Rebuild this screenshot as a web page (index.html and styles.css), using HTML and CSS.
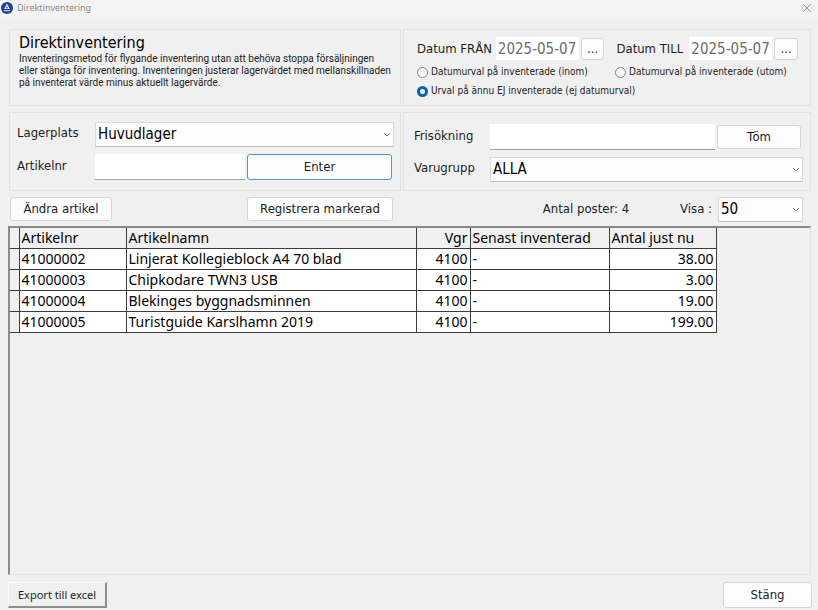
FILE: index.html
```html
<!DOCTYPE html>
<html lang="sv">
<head>
    <meta charset="UTF-8">
    <title>Direktinventering</title>
    <link rel="stylesheet" href="styles.css">
</head>
<body>
    <header class="titlebar">
        <svg class="app-icon" width="12" height="12" viewBox="0 0 12 12">
            <circle cx="6" cy="6" r="6" fill="#1c3f97"/>
            <path d="M6 1.5 L9 7 H3 Z" fill="#dfe8fb"/>
            <path d="M6 4 L7.2 6.2 H4.8 Z" fill="#3d62b5"/>
            <path d="M2.5 8 H9.5 L8.6 9.3 H3.4 Z" fill="#b9c9ee"/>
        </svg>
        <span class="window-title">Direktinventering</span>
        <button class="close" aria-label="Stäng fönster">
            <svg width="8" height="8" viewBox="0 0 8 8"><path d="M0.3 0.3 L7.7 7.7 M7.7 0.3 L0.3 7.7" stroke="#8f8f8f" fill="none"/></svg>
        </button>
    </header>

    <main class="content">
        <div class="panels">
            <section class="panel intro">
                <h1>Direktinventering</h1>
                <p>Inventeringsmetod för flygande inventering utan att behöva stoppa försäljningen<br>
                eller stänga för inventering. Inventeringen justerar lagervärdet med mellanskillnaden<br>
                på inventerat värde minus aktuellt lagervärde.</p>
            </section>

            <section class="panel dates">
                <div class="date-row">
                    <label for="from">Datum FRÅN</label>
                    <input class="date" id="from" type="text" value="2025-05-07">
                    <button class="btn dots">...</button>
                    <label class="to" for="to">Datum TILL</label>
                    <input class="date" id="to" type="text" value="2025-05-07">
                    <button class="btn dots">...</button>
                </div>
                <div class="radios">
                    <label><input type="radio" name="urval">Datumurval på inventerade (inom)</label>
                    <label><input type="radio" name="urval">Datumurval på inventerade (utom)</label>
                    <label><input type="radio" name="urval" checked>Urval på ännu EJ inventerade (ej datumurval)</label>
                </div>
            </section>

            <section class="panel place">
                <label for="lager">Lagerplats</label>
                <div class="select wide">
                    <select id="lager"><option>Huvudlager</option></select>
                    <svg class="arrow" width="8" height="5" viewBox="0 0 8 5"><path d="M1 1 L4 4 L7 1"/></svg>
                </div>
                <label for="artnr">Artikelnr</label>
                <input class="field" id="artnr" type="text">
                <button class="btn enter">Enter</button>
            </section>

            <section class="panel search">
                <label for="fri">Frisökning</label>
                <input class="field" id="fri" type="text">
                <button class="btn clear">Töm</button>
                <label for="grupp">Varugrupp</label>
                <div class="select wide">
                    <select id="grupp"><option>ALLA</option></select>
                    <svg class="arrow" width="8" height="5" viewBox="0 0 8 5"><path d="M1 1 L4 4 L7 1"/></svg>
                </div>
            </section>
        </div>

        <div class="toolbar">
            <button class="btn edit">Ändra artikel</button>
            <button class="btn register">Registrera markerad</button>
            <span class="count">Antal poster: 4</span>
            <label for="visa">Visa :</label>
            <div class="select show">
                <select id="visa"><option>50</option></select>
                <svg class="arrow" width="8" height="5" viewBox="0 0 8 5"><path d="M1 1 L4 4 L7 1"/></svg>
            </div>
        </div>

        <div class="grid">
            <table>
                <colgroup>
                    <col class="c-mark"><col class="c-nr"><col class="c-name"><col class="c-vgr"><col class="c-date"><col class="c-qty">
                </colgroup>
                <thead>
                    <tr><th></th><th>Artikelnr</th><th>Artikelnamn</th><th class="num">Vgr</th><th>Senast inventerad</th><th>Antal just nu</th></tr>
                </thead>
                <tbody>
                    <tr><td></td><td>41000002</td><td>Linjerat Kollegieblock A4 70 blad</td><td class="num">4100</td><td>-</td><td class="num">38.00</td></tr>
                    <tr><td></td><td>41000003</td><td>Chipkodare TWN3 USB</td><td class="num">4100</td><td>-</td><td class="num">3.00</td></tr>
                    <tr><td></td><td>41000004</td><td>Blekinges byggnadsminnen</td><td class="num">4100</td><td>-</td><td class="num">19.00</td></tr>
                    <tr><td></td><td>41000005</td><td>Turistguide Karslhamn 2019</td><td class="num">4100</td><td>-</td><td class="num">199.00</td></tr>
                </tbody>
            </table>
        </div>
    </main>

    <footer class="footer">
        <button class="export">Export till excel</button>
        <button class="btn quit">Stäng</button>
    </footer>
</body>
</html>
```
FILE: styles.css
```css
* {
    margin: 0;
    padding: 0;
    box-sizing: border-box;
}

body {
    font-family: Tahoma, "DejaVu Sans Condensed", "Noto Sans", sans-serif;
    font-size: 13px;
    line-height: 16px;
    color: #1c1c1c;
    background-color: #f0f0f0;
    display: flex;
    flex-direction: column;
    min-height: 100vh;
}

button, input, select {
    font: inherit;
    color: inherit;
}

/* Title bar */
.titlebar {
    display: flex;
    align-items: center;
    height: 19px;
    padding: 0 7px 3px 1px;
    background-color: #f3f3f3;
}

.window-title {
    flex: 1;
    margin-left: 4px;
    font-family: "Noto Sans", sans-serif;
    font-size: 9px;
    color: #8a8a8a;
}

.close {
    display: flex;
    border: none;
    background: none;
}

.content {
    flex: 1;
    display: flex;
    flex-direction: column;
    padding: 10px 7px 0 8px;
}

/* Panels */
.panels {
    display: grid;
    grid-template-columns: minmax(0, 392fr) minmax(0, 408fr);
    grid-template-rows: 77px 79px;
    gap: 6px 2px;
    padding-left: 1px;
}

.panel {
    border: 1px solid #e2e2e2;
}

.intro {
    padding: 3px 9px;
    white-space: nowrap;
}

.intro h1 {
    font-size: 16px;
    font-weight: normal;
    line-height: 20px;
    color: #000;
}

.intro p {
    font-family: Tahoma, Roboto, sans-serif;
    font-size: 10px;
    line-height: 12px;
}

.dates {
    padding: 7px 12px 0 13px;
}

.date-row {
    display: flex;
    align-items: center;
    gap: 2px;
    white-space: nowrap;
}

.date-row label {
    width: 78px;
}

.date-row .to {
    width: 72px;
    margin-left: 10px;
}

.date {
    width: 83px;
    height: 23px;
    padding: 0 2px;
    border: none;
    background-color: #fff;
    font-size: 15px;
    color: #6d6d6d;
}

.radios {
    display: grid;
    grid-template-columns: 198px 1fr;
    row-gap: 3px;
    margin-top: 4px;
    font-size: 10px;
    white-space: nowrap;
}

.radios label {
    display: flex;
    align-items: center;
    gap: 3px;
}

.radios label:last-child {
    grid-column: 1 / 3;
}

.radios input {
    appearance: none;
    width: 11px;
    height: 11px;
    border: 1px solid #858585;
    border-radius: 50%;
    background-color: #f5f5f5;
}

.radios input:checked {
    border: 3px solid #0560b6;
    background-color: #fff;
}

/* Fields */
.field {
    width: 100%;
    height: 26px;
    padding: 0 3px;
    border: none;
    border-bottom: 1px solid #a2a2a2;
    background-color: #fff;
}

.select {
    display: grid;
    align-items: center;
    position: relative;
}

.select select {
    appearance: none;
    width: 100%;
    height: 25px;
    padding: 0 2px;
    border: 1px solid #dadada;
    border-bottom-color: #bdbdbd;
    background-color: #fdfdfd;
    font-size: 15px;
    color: #000;
}

.arrow {
    position: absolute;
    right: 3px;
    fill: none;
    stroke: #808080;
}

.place, .search {
    display: grid;
    align-items: center;
    align-content: start;
}

.place label, .search label {
    align-self: start;
    padding-top: 4px;
}

.place {
    grid-template-columns: 77px 150px 1fr;
    grid-template-rows: 26px 26px;
    column-gap: 1px;
    row-gap: 7px;
    padding: 8px 6px 0 7px;
}

.search {
    grid-template-columns: 75px 1fr 87px;
    grid-template-rows: 26px 26px;
    column-gap: 1px;
    row-gap: 6px;
    padding: 11px 7px 0 10px;
}

.wide {
    grid-column: 2 / 4;
}

/* Buttons */
.btn {
    height: 24px;
    border: 1px solid #d6d6d6;
    border-radius: 3px;
    background-color: #fdfdfd;
}

.dots {
    width: 24px;
    height: 22px;
}

.enter {
    height: 26px;
    margin: 0 2px 0 1px;
    border: 1px solid #4a98da;
}

.clear {
    margin: 0 2px 0 1px;
}

/* Row above the table */
.toolbar {
    display: flex;
    align-items: center;
    height: 35px;
    padding: 1px 8px 0 2px;
    white-space: nowrap;
}

.edit {
    width: 102px;
}

.register {
    width: 146px;
    margin-left: 135px;
}

.count {
    margin-left: auto;
    margin-right: 51px;
}

.show {
    width: 85px;
    margin-left: 6px;
}

.show select {
    border-radius: 2px;
}

/* Table */
.grid {
    flex: 1;
    border: 1px solid #e3e3e3;
    border-top: 2px solid #8c8c8c;
    border-left: 2px solid #8c8c8c;
}

table {
    width: 706px;
    table-layout: fixed;
    border-collapse: collapse;
    font-family: Tahoma, "Noto Sans", sans-serif;
    font-size: 14px;
    line-height: 18px;
    color: #000;
    white-space: nowrap;
}

.c-mark { width: 9px; }
.c-nr { width: 107px; }
.c-name { width: 290px; }
.c-vgr { width: 54px; }
.c-date { width: 139px; }
.c-qty { width: 107px; }

th, td {
    height: 21px;
    padding: 1px 2px;
    border: 1px solid #3c3c3c;
    background-color: #fff;
    font-weight: normal;
    text-align: left;
}

th {
    height: 20px;
    padding: 0 2px;
    border-top: none;
    background-color: #f0f0f0;
}

th:first-child, td:first-child {
    border-left: none;
    background-color: #f0f0f0;
}

.num {
    text-align: right;
}

/* Footer */
.footer {
    display: flex;
    justify-content: space-between;
    padding: 7px 6px 2px 8px;
}

.export {
    width: 99px;
    height: 26px;
    border: 1px solid #fafafa;
    border-right: 2px solid #8e8e8e;
    border-bottom: 2px solid #8e8e8e;
    background-color: #f0f0f0;
    font-family: Tahoma, "Noto Sans", sans-serif;
    font-size: 11px;
}

.quit {
    width: 89px;
    height: 26px;
}
```
